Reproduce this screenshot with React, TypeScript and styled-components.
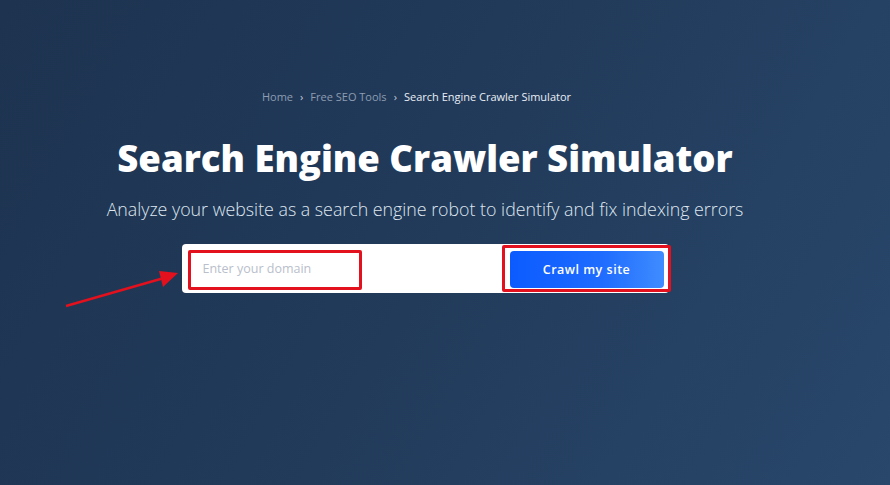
import React, { useState } from "react";
import styled, { createGlobalStyle } from "styled-components";

const GlobalStyle = createGlobalStyle`
    html, body {
        margin: 0;
        padding: 0;
    }
    body {
        font-family: "Open Sans", "Liberation Sans", sans-serif;
    }
`;

const Page = styled.div`
    width: 890px;
    height: 485px;
    box-sizing: border-box;
    padding-right: 40px;
    overflow: hidden;
    background: linear-gradient(120deg, #1d3350 0%, #223b5b 50%, #28476b 100%);
    display: flex;
    flex-direction: column;
    align-items: center;
`;

const Breadcrumbs = styled.nav`
    margin: 88px 17px 0 0;
    display: flex;
    align-items: center;
    gap: 7px;
    font-size: 11px;
    line-height: 18px;
`;

const Crumb = styled.a<{ current?: boolean }>`
    color: ${p => (p.current ? "#e9eef5" : "#8d9db2")};
    text-decoration: none;
`;

const Separator = styled.span`
    color: #c3ccd8;
    font-size: 11px;
`;

const Title = styled.h1`
    margin: 28px 0 0;
    color: #ffffff;
    font-size: 36.5px;
    font-weight: 800;
    line-height: 48px;
`;

const Subtitle = styled.p`
    margin: 15px 0 0;
    color: #dfe6ef;
    font-size: 17.8px;
    font-weight: 300;
    line-height: 24px;
`;

const SearchWrap = styled.div`
    position: relative;
    margin-top: 23px;
`;

const SearchBar = styled.form`
    width: 487px;
    height: 49px;
    box-sizing: border-box;
    background: #ffffff;
    border-radius: 4px;
    display: flex;
    align-items: flex-start;
    justify-content: space-between;
    padding: 0 5px 0 6px;
`;

const FieldBox = styled.div`
    position: relative;
    margin-top: 6px;
    width: 310px;
    height: 40px;
    display: flex;
    align-items: center;
`;

const DomainInput = styled.input`
    border: none;
    outline: none;
    background: transparent;
    width: 100%;
    padding: 0 0 4px 15px;
    font-family: inherit;
    font-size: 12.5px;
    color: #333;
    &::placeholder {
        color: #b9c0cb;
    }
`;

const ButtonBox = styled.div`
    position: relative;
    margin-top: 4px;
    padding: 3px 0;
`;

const CrawlButton = styled.button`
    width: 154px;
    height: 37px;
    border: none;
    border-radius: 4px;
    background: linear-gradient(90deg, #0b5bff 0%, #1f6cff 60%, #3f8cff 100%);
    color: #ffffff;
    font-family: inherit;
    font-size: 12.5px;
    font-weight: 600;
    letter-spacing: 0.5px;
    cursor: pointer;
`;

const Highlight = styled.span<{ inset: string }>`
    position: absolute;
    inset: ${p => p.inset};
    border: 3px solid #e3101d;
    border-radius: 2px;
    pointer-events: none;
`;

const Arrow = styled.svg`
    position: absolute;
    left: -118px;
    top: 24px;
    overflow: visible;
`;

function App() {
    const [domain, setDomain] = useState<string>("");

    return (
        <Page>
            <GlobalStyle />
            <Breadcrumbs>
                <Crumb href="#">Home</Crumb>
                <Separator>›</Separator>
                <Crumb href="#">Free SEO Tools</Crumb>
                <Separator>›</Separator>
                <Crumb current>Search Engine Crawler Simulator</Crumb>
            </Breadcrumbs>
            <Title>Search Engine Crawler Simulator</Title>
            <Subtitle>
                Analyze your website as a search engine robot to identify and fix indexing errors
            </Subtitle>
            <SearchWrap>
                <SearchBar onSubmit={e => e.preventDefault()}>
                    <FieldBox>
                        <DomainInput
                            placeholder="Enter your domain"
                            value={domain}
                            onChange={e => setDomain(e.target.value)}
                        />
                        <Highlight inset="0 136px 0 0" />
                    </FieldBox>
                    <ButtonBox>
                        <CrawlButton type="submit">Crawl my site</CrawlButton>
                        <Highlight inset="-3px -7px -1px -8px" />
                    </ButtonBox>
                </SearchBar>
                <Arrow width="115" height="40" viewBox="0 0 115 40">
                    <line x1="2" y1="38" x2="100" y2="10" stroke="#e3101d" strokeWidth="2.5" />
                    <polygon points="114,5 95,3 99,19" fill="#e3101d" />
                </Arrow>
            </SearchWrap>
        </Page>
    );
}

export default App;
